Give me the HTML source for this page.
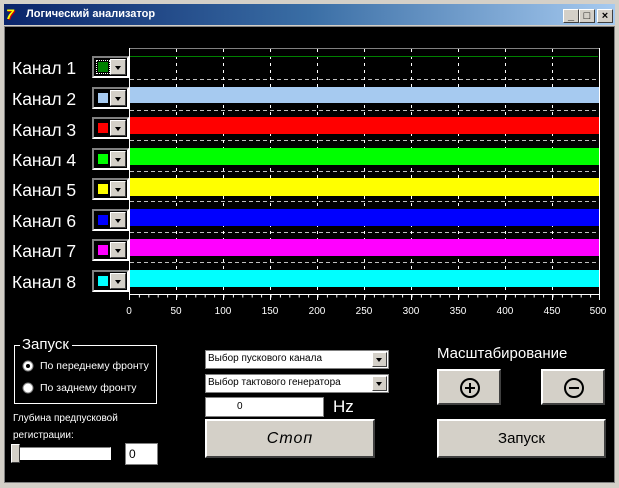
<!DOCTYPE html>
<html><head><meta charset="utf-8"><style>
*{margin:0;padding:0;box-sizing:border-box}
body{width:619px;height:488px;background:#d4d0c8;position:relative;overflow:hidden;font-family:"Liberation Sans","DejaVu Sans",sans-serif}
.a{position:absolute}
.title{left:4px;top:4px;width:611px;height:21px;background:linear-gradient(90deg,#0a246a,#3a6ea5 50%,#a6caf0);color:#fff;font-weight:bold;font-size:11px;line-height:21px;padding-left:22px}
.client{left:4px;top:26px;width:611px;height:457px;background:#000;border:1px solid #808080}
.lbl{color:#fff;font-size:17.5px;left:12px}
.sel{width:37px;height:22px;background:#000;border:2px solid;border-color:#808080 #fff #fff #808080;left:92px}
.sel i{position:absolute;left:3px;top:3px;width:12px;height:12px;border:1px solid #000}
.sel b{position:absolute;right:1px;top:1px;width:16px;height:16px;background:#d4d0c8;border:1px solid;border-color:#fff #404040 #404040 #fff}
.sel b:after{content:"";position:absolute;left:4px;top:6px;border:3px solid transparent;border-top:4px solid #000;border-bottom:0}
.btn{background:#d4d0c8;border:2px solid;border-color:#fff #404040 #404040 #fff;text-align:center;color:#000}
.combo{background:#fff;border:1px solid #808080;font-size:10px;line-height:16px;padding-left:2px;color:#000}
.combo b{position:absolute;right:1px;top:1px;width:15px;height:15px;background:#d4d0c8;border:1px solid;border-color:#fff #404040 #404040 #fff}
.combo b:after{content:"";position:absolute;left:3px;top:5px;border:3px solid transparent;border-top:4px solid #000;border-bottom:0}
.wb{width:16px;height:14px;top:9px;background:#d4d0c8;border:1px solid;border-color:#fff #404040 #404040 #fff;font-size:11px;line-height:12px;text-align:center;font-weight:bold}
</style></head><body>
<div class="a title">Логический анализатор</div>
<div class="a" style="left:6px;top:7px;width:14px;height:15px;color:#ff0;font-weight:bold;font-size:14px;line-height:15px;font-style:italic;text-shadow:1px 1px #c00">7</div>
<div class="a wb" style="left:563px">_</div>
<div class="a wb" style="left:579px">□</div>
<div class="a wb" style="left:597px">×</div>
<div class="a client"></div>
<svg class="a" style="left:0;top:0" width="619" height="488">
<line x1="129" y1="48.5" x2="599" y2="48.5" stroke="#808080"/>
<g stroke="#c0c0c0" stroke-dasharray="4,3">
<line x1="130" y1="79.5" x2="598" y2="79.5"/><line x1="130" y1="110.5" x2="598" y2="110.5"/><line x1="130" y1="140.5" x2="598" y2="140.5"/><line x1="130" y1="171.5" x2="598" y2="171.5"/><line x1="130" y1="201.5" x2="598" y2="201.5"/><line x1="130" y1="232.5" x2="598" y2="232.5"/><line x1="130" y1="262.5" x2="598" y2="262.5"/>
</g>
<g stroke="#fff" stroke-dasharray="3,4">
<line x1="176.5" y1="49" x2="176.5" y2="293"/><line x1="223.5" y1="49" x2="223.5" y2="293"/><line x1="270.5" y1="49" x2="270.5" y2="293"/><line x1="317.5" y1="49" x2="317.5" y2="293"/><line x1="364.5" y1="49" x2="364.5" y2="293"/><line x1="411.5" y1="49" x2="411.5" y2="293"/><line x1="458.5" y1="49" x2="458.5" y2="293"/><line x1="505.5" y1="49" x2="505.5" y2="293"/><line x1="552.5" y1="49" x2="552.5" y2="293"/>
</g>
<line x1="130" y1="56.5" x2="598" y2="56.5" stroke="#008000"/>
<rect x="130" y="87" width="469" height="16" fill="#a6caf0"/>
<rect x="130" y="117" width="469" height="17" fill="#f00"/>
<rect x="130" y="148" width="469" height="17" fill="#0f0"/>
<rect x="130" y="178" width="469" height="18" fill="#ff0"/>
<rect x="130" y="209" width="469" height="17" fill="#00f"/>
<rect x="130" y="239" width="469" height="17" fill="#f0f"/>
<rect x="130" y="270" width="469" height="17" fill="#0ff"/>
<line x1="129.5" y1="48" x2="129.5" y2="295" stroke="#fff"/>
<line x1="599.5" y1="48" x2="599.5" y2="295" stroke="#fff"/>
<line x1="129" y1="294.5" x2="600" y2="294.5" stroke="#fff"/>
<g fill="#fff" font-size="10" font-family="Liberation Sans,sans-serif" text-anchor="middle">
<text x="129" y="314">0</text><text x="176" y="314">50</text><text x="223" y="314">100</text><text x="270" y="314">150</text><text x="317" y="314">200</text><text x="364" y="314">250</text><text x="411" y="314">300</text><text x="458" y="314">350</text><text x="505" y="314">400</text><text x="552" y="314">450</text><text x="598" y="314">500</text>
</g>
<g stroke="#fff">
<line x1="129.5" y1="294" x2="129.5" y2="300"/><line x1="176.5" y1="294" x2="176.5" y2="300"/><line x1="223.5" y1="294" x2="223.5" y2="300"/><line x1="270.5" y1="294" x2="270.5" y2="300"/><line x1="317.5" y1="294" x2="317.5" y2="300"/><line x1="364.5" y1="294" x2="364.5" y2="300"/><line x1="411.5" y1="294" x2="411.5" y2="300"/><line x1="458.5" y1="294" x2="458.5" y2="300"/><line x1="505.5" y1="294" x2="505.5" y2="300"/><line x1="552.5" y1="294" x2="552.5" y2="300"/><line x1="599.5" y1="294" x2="599.5" y2="300"/>
</g>
<g stroke="#fff"><line x1="138.9" y1="296" x2="599" y2="296" stroke-width="3" stroke-dasharray="1,8.4"/></g>
<rect x="14.5" y="345.5" width="142" height="58" fill="none" stroke="#fff"/>
<rect x="20" y="340" width="52" height="12" fill="#000"/>
<circle cx="28" cy="366" r="5" fill="#fff" stroke="#808080"/><circle cx="28" cy="366" r="2" fill="#000"/>
<circle cx="28" cy="388" r="5" fill="#fff" stroke="#808080"/>
</svg>
<div class="a btn" style="left:437px;top:369px;width:64px;height:36px"><svg width="60" height="32"><circle cx="31" cy="17" r="9" fill="none" stroke="#000" stroke-width="2"/><line x1="26" y1="17" x2="36" y2="17" stroke="#000" stroke-width="2"/><line x1="31" y1="12" x2="31" y2="22" stroke="#000" stroke-width="2"/></svg></div>
<div class="a btn" style="left:541px;top:369px;width:64px;height:36px"><svg width="60" height="32"><circle cx="31" cy="17" r="9" fill="none" stroke="#000" stroke-width="2"/><line x1="26" y1="17" x2="36" y2="17" stroke="#000" stroke-width="2"/></svg></div>

<div class="a lbl" style="top:58px">Канал 1</div>
<div class="a lbl" style="top:89px">Канал 2</div>
<div class="a lbl" style="top:120px">Канал 3</div>
<div class="a lbl" style="top:150px">Канал 4</div>
<div class="a lbl" style="top:180px">Канал 5</div>
<div class="a lbl" style="top:211px">Канал 6</div>
<div class="a lbl" style="top:241px">Канал 7</div>
<div class="a lbl" style="top:272px">Канал 8</div>
<div class="a sel" style="top:56px"><i style="background:#008000;outline:1px dotted #fff"></i><b></b></div>
<div class="a sel" style="top:87px"><i style="background:#a6caf0"></i><b></b></div>
<div class="a sel" style="top:117px"><i style="background:#f00"></i><b></b></div>
<div class="a sel" style="top:148px"><i style="background:#0f0"></i><b></b></div>
<div class="a sel" style="top:178px"><i style="background:#ff0"></i><b></b></div>
<div class="a sel" style="top:209px"><i style="background:#00f"></i><b></b></div>
<div class="a sel" style="top:239px"><i style="background:#f0f"></i><b></b></div>
<div class="a sel" style="top:270px"><i style="background:#0ff"></i><b></b></div>

<div class="a" style="left:22px;top:336px;color:#fff;font-size:15px">Запуск</div>
<div class="a" style="left:40px;top:360px;color:#fff;font-size:10.5px">По переднему фронту</div>
<div class="a" style="left:40px;top:382px;color:#fff;font-size:10.5px">По заднему фронту</div>
<div class="a" style="left:13px;top:413px;color:#fff;font-size:10px">Глубина предпусковой</div>
<div class="a" style="left:13px;top:430px;color:#fff;font-size:10px">регистрации:</div>
<div class="a" style="left:13px;top:447px;width:98px;height:13px;background:#fff;border:1px solid;border-color:#808080 #fff #fff #808080"></div>
<div class="a btn" style="left:11px;top:444px;width:9px;height:19px;border-width:1px"></div>
<div class="a" style="left:125px;top:443px;width:33px;height:22px;background:#fff;border:1px solid #808080;font-size:12px;padding:3px 3px">0</div>

<div class="a combo" style="left:205px;top:350px;width:184px;height:19px">Выбор пускового канала<b></b></div>
<div class="a combo" style="left:205px;top:374px;width:184px;height:19px">Выбор тактового генератора<b></b></div>
<div class="a" style="left:205px;top:397px;width:119px;height:20px;background:#fff;border:1px solid #808080;font-size:10px;line-height:18px;padding-left:31px">0</div>
<div class="a" style="left:333px;top:397px;color:#fff;font-size:17px">Hz</div>
<div class="a btn" style="left:205px;top:419px;width:170px;height:39px;font-size:16px;line-height:35px;font-style:italic;letter-spacing:1px">Стоп</div>
<div class="a" style="left:437px;top:345px;color:#fff;font-size:15px">Масштабирование</div>
<div class="a btn" style="left:437px;top:419px;width:169px;height:39px;font-size:15px;line-height:35px">Запуск</div>
</body></html>
